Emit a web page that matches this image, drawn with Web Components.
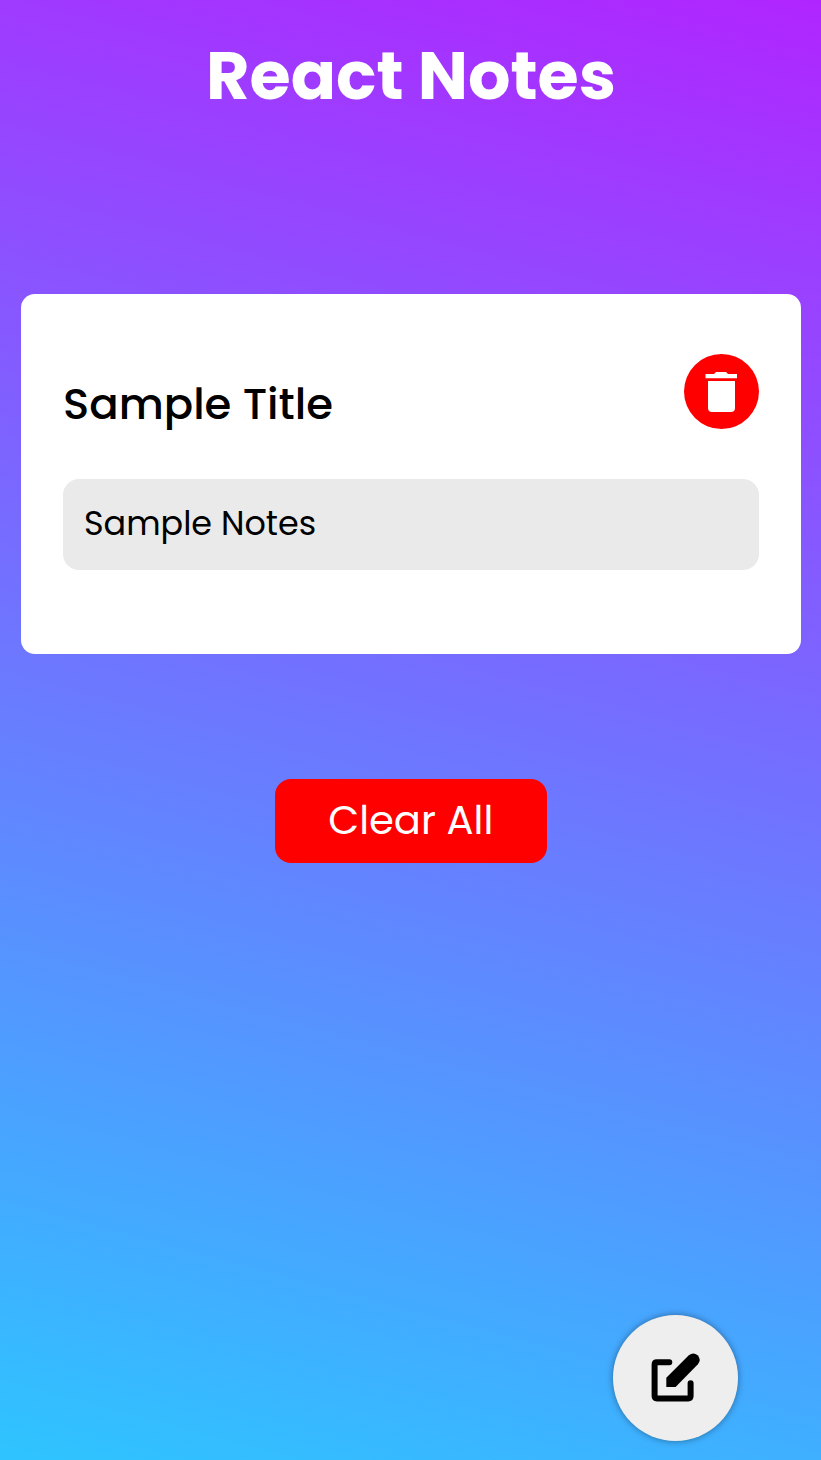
<!DOCTYPE html>
<html lang="en">
<head>
<meta charset="utf-8">
<title>React Notes</title>
<style>
html,body{margin:0;height:100%}
body{font-family:Poppins,Inter,"Open Sans",sans-serif}
</style>
</head>
<body>
<notes-app>
  <notes-heading slot="heading">React Notes</notes-heading>
  <note-card><span slot="title">Sample Title</span><span slot="text">Sample Notes</span></note-card>
  <clear-button>Clear All</clear-button>
  <edit-button slot="action"></edit-button>
</notes-app>
<script>
const define = (name, html) => customElements.define(name, class extends HTMLElement {
  constructor() {
    super();
    this.attachShadow({ mode: "open" }).innerHTML = html;
  }
});

define("notes-app", `
<style>
:host{display:flex;flex-direction:column;box-sizing:border-box;min-height:100%;height:1460px;position:relative;overflow:hidden;padding:0 20px 0 21px;
background:linear-gradient(15deg,#2ec4ff 0%,#b025ff 100%)}
main{display:flex;flex-direction:column;align-items:center;gap:125px;padding-top:142px}
.action{position:absolute;right:83px;bottom:19.5px}
</style>
<slot name="heading"></slot>
<main><slot></slot></main>
<div class="action"><slot name="action"></slot></div>`);

define("notes-heading", `
<style>
:host{display:block;padding-top:29px}
h1{margin:0;height:123px;box-sizing:border-box;font-size:66.8px;line-height:93px;font-weight:700;text-align:center;color:#fff;white-space:nowrap}
</style>
<h1><slot></slot></h1>`);

define("note-card", `
<style>
:host{display:block;box-sizing:border-box;width:780px;height:360px;border-radius:14px;background:#fff;padding:60px 42px 0}
header{display:flex;justify-content:space-between;height:125px}
h2{margin:18px 0 0;font-size:43.4px;line-height:63px;font-weight:500;color:#000;white-space:nowrap}
button{box-sizing:border-box;width:75px;height:75px;border:0;padding:0;border-radius:50%;background:#f00}
svg{display:block}
p{margin:0;box-sizing:border-box;height:91px;border-radius:16px;background:#eaeaea;padding:0 21px;font-size:33.4px;line-height:90px;color:#000}
</style>
<header><h2><slot name="title"></slot></h2>
<button aria-label="Delete note"><svg width="75" height="75" viewBox="684 354 75 75" fill="#fff"><path d="M705.5 374h8.5l2-2h10l2 2h9v4.2h-31.5zM708 381h27v27q0 4-4 4h-19q-4 0-4-4z"/></svg></button></header>
<p><slot name="text"></slot></p>`);

define("clear-button", `
<style>
:host{display:block;margin-right:.5px}
button{display:block;width:271.5px;height:84px;border:0;border-radius:16px;padding:0 0 2px;background:#f00;color:#fff;font-family:inherit;font-size:40.1px;line-height:82px;font-weight:400}
</style>
<button><slot></slot></button>`);

define("edit-button", `
<style>
:host{display:block}
button{display:block;width:125px;height:125.5px;border:0;padding:0;border-radius:50%;background:#eee;box-shadow:0 0 7px rgba(0,0,0,.4)}
svg{display:block}
</style>
<button aria-label="Write a note"><svg width="125" height="125.5" viewBox="613 1315 125 125.5"><path d="M669.3 1362.3H657q-2.4 0-2.4 2.4V1396q0 2.4 2.4 2.4h31.2q2.4 0 2.4-2.4v-12.8" fill="none" stroke="#000" stroke-width="6" stroke-linecap="round"/><path d="M666.3 1387v-9.2l22.3-22.3q4.8-4 9-.2 4 4.2.3 9L675.6 1387z"/></svg></button>`);
</script>
</body>
</html>
